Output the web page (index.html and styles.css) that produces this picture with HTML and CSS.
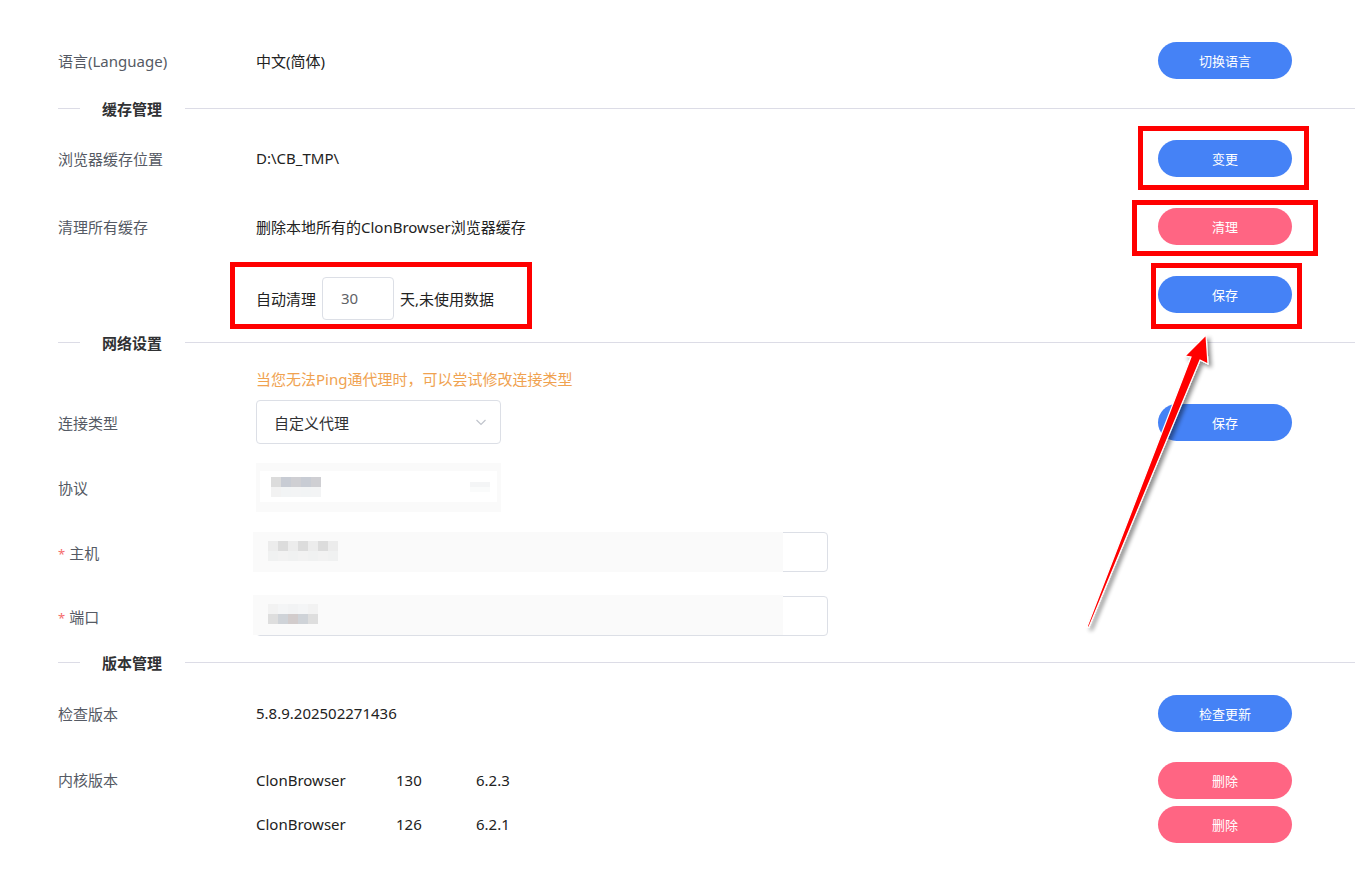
FILE: index.html
```html
<!DOCTYPE html>
<html lang="zh-CN">
<head>
    <meta charset="UTF-8">
    <title>设置</title>
    <link rel="stylesheet" href="styles.css">
</head>
<body>
    <div class="page">
        <div class="row row-lang">
            <div class="label">语言(Language)</div>
            <div class="value">中文(简体)</div>
            <button class="btn btn-blue">切换语言</button>
        </div>

        <div class="divider"><span class="divider-title">缓存管理</span></div>

        <div class="row row-cache">
            <div class="label">浏览器缓存位置</div>
            <div class="value">D:\CB_TMP\</div>
            <button class="btn btn-blue">变更</button>
        </div>
        <div class="row row-cache">
            <div class="label">清理所有缓存</div>
            <div class="value">删除本地所有的ClonBrowser浏览器缓存</div>
            <button class="btn btn-pink">清理</button>
        </div>
        <div class="row row-auto">
            <div class="label"></div>
            <div class="value auto-clean">
                自动清理
                <input class="days-input" type="text" value="30">
                天,未使用数据
            </div>
            <button class="btn btn-blue">保存</button>
        </div>

        <div class="divider"><span class="divider-title">网络设置</span></div>

        <div class="hint">当您无法Ping通代理时，可以尝试修改连接类型</div>
        <div class="row row-select">
            <div class="label">连接类型</div>
            <div class="value">
                <div class="select">
                    <span>自定义代理</span>
                    <svg class="chevron" width="12" height="12" viewBox="0 0 12 12"><path d="M1.5 4 L6 8.5 L10.5 4" fill="none" stroke="#c0c4cc" stroke-width="1.2"/></svg>
                </div>
            </div>
            <button class="btn btn-blue">保存</button>
        </div>
        <div class="row row-protocol">
            <div class="label">协议</div>
            <div class="value">
                <div class="mosaic-box">
                    <div class="mosaic-inner">
                        <div class="pixels">
                            <i class="p1"></i><i class="p2"></i><i class="p3"></i><i class="p2"></i><i class="p3"></i>
                        </div>
                        <div class="pixels pixels-end"><i class="p0"></i><i class="p0"></i></div>
                    </div>
                </div>
            </div>
        </div>
        <div class="row row-field row-host">
            <div class="label"><span class="req">*</span>主机</div>
            <div class="value">
                <div class="field">
                    <div class="field-blur">
                        <div class="pixels"><i class="p4"></i><i class="p1"></i><i class="p4"></i><i class="p1"></i><i class="p4"></i><i class="p1"></i><i class="p4"></i></div>
                    </div>
                </div>
            </div>
        </div>
        <div class="row row-field row-port">
            <div class="label"><span class="req">*</span>端口</div>
            <div class="value">
                <div class="field">
                    <div class="field-blur">
                        <div class="pixels pixels-low"><i class="p1"></i><i class="p3"></i><i class="p2"></i><i class="p3"></i><i class="p1"></i></div>
                    </div>
                </div>
            </div>
        </div>

        <div class="divider divider-version"><span class="divider-title">版本管理</span></div>

        <div class="row row-check">
            <div class="label">检查版本</div>
            <div class="value">5.8.9.202502271436</div>
            <button class="btn btn-blue">检查更新</button>
        </div>
        <div class="row row-kernel">
            <div class="label">内核版本</div>
            <div class="kernel-list">
                <div class="kernel-item">
                    <span class="k-name">ClonBrowser</span>
                    <span class="k-major">130</span>
                    <span class="k-ver">6.2.3</span>
                    <button class="btn btn-pink">删除</button>
                </div>
                <div class="kernel-item">
                    <span class="k-name">ClonBrowser</span>
                    <span class="k-major">126</span>
                    <span class="k-ver">6.2.1</span>
                    <button class="btn btn-pink">删除</button>
                </div>
            </div>
        </div>

        <!-- 标注 -->
        <div class="mark mark-change"></div>
        <div class="mark mark-clear"></div>
        <div class="mark mark-save"></div>
        <div class="mark mark-auto"></div>
        <svg class="arrow" width="1355" height="872" viewBox="0 0 1355 872">
            <defs>
                <filter id="shadow" x="-20%" y="-20%" width="140%" height="140%">
                    <feGaussianBlur in="SourceAlpha" stdDeviation="2"/>
                    <feOffset dx="3" dy="3"/>
                    <feComponentTransfer><feFuncA type="linear" slope="0.45"/></feComponentTransfer>
                    <feMerge><feMergeNode/><feMergeNode in="SourceGraphic"/></feMerge>
                </filter>
            </defs>
            <polygon filter="url(#shadow)" points="1206,335 1208,364 1200,360 1089,627 1087,627 1191,357 1185,356" fill="#ff0000" stroke="#ffffff" stroke-width="1.2" stroke-linejoin="miter"/>
        </svg>
    </div>
</body>
</html>
```

FILE: styles.css
```css
* {
    box-sizing: border-box;
}
body {
    margin: 0;
    background-color: #ffffff;
    font-family: "Microsoft YaHei", "Noto Sans", "Noto Sans CJK SC", sans-serif;
    font-size: 15px;
    color: #222222;
}
.page {
    position: relative;
    width: 1355px;
    height: 872px;
    padding: 28px 0 0 58px;
    overflow: hidden;
}
.row {
    display: flex;
    align-items: center;
    padding-right: 63px;
}
.label {
    width: 198px;
    flex-shrink: 0;
    color: #555a64;
}
.value {
    flex: 1;
    display: flex;
    align-items: center;
    color: #222222;
}
.btn {
    width: 134px;
    height: 37px;
    border: none;
    border-radius: 19px;
    color: #ffffff;
    font-family: inherit;
    font-size: 13px;
    cursor: pointer;
}
.btn-blue {
    background-color: #4582f6;
}
.btn-pink {
    background-color: #ff6583;
}
.row-lang {
    height: 64px;
}
.row-cache {
    height: 68px;
}
.row-auto {
    height: 76px;
}
.row-auto .btn {
    margin-bottom: 8px;
}
.divider {
    display: flex;
    align-items: center;
    height: 32px;
}
.divider::before {
    content: "";
    width: 22px;
    height: 1px;
    background-color: #dcdce6;
}
.divider::after {
    content: "";
    flex: 1;
    height: 1px;
    background-color: #dcdce6;
}
.row-auto + .divider {
    height: 12px;
}
.divider-title {
    padding: 0 23px 0 22px;
    font-weight: bold;
    color: #303133;
}
.auto-clean {
    gap: 6px;
}
.days-input {
    width: 72px;
    height: 43px;
    padding: 0 0 0 18px;
    border: 1px solid #dcdfe6;
    border-radius: 4px;
    font-family: inherit;
    font-size: 15px;
    color: #606266;
    outline: none;
}
.hint {
    margin: 19px 0 9px 198px;
    height: 24px;
    line-height: 24px;
    color: #f0a250;
}
.row-select {
    height: 44px;
}
.select {
    width: 245px;
    height: 44px;
    border: 1px solid #dcdfe6;
    border-radius: 4px;
    display: flex;
    align-items: center;
    justify-content: space-between;
    padding: 0 13px 0 17px;
    color: #303133;
}
.row-protocol {
    margin-top: 19px;
    height: 49px;
}
.mosaic-box {
    width: 245px;
    height: 49px;
    background-color: #fafafa;
    padding: 8px 4px 10px 4px;
}
.mosaic-inner {
    height: 100%;
    background-color: #ffffff;
    display: flex;
    align-items: center;
    justify-content: space-between;
    padding: 0 7px 0 11px;
}
.pixels {
    display: grid;
    grid-template-columns: repeat(auto-fill, 10px);
    grid-auto-flow: column;
}
.pixels i {
    display: block;
    width: 10px;
    height: 20px;
}
.pixels .p0 {
    background: linear-gradient(#f4f5f6 50%, #fafbfb 50%);
}
.pixels .p1 {
    background: linear-gradient(#dcdcdc 50%, #f2f2f2 50%);
}
.pixels .p2 {
    background: linear-gradient(#c8ccd4 50%, #f2f4f5 50%);
}
.pixels .p3 {
    background: linear-gradient(#cfcfd3 50%, #f3f4f5 50%);
}
.pixels .p4 {
    background: linear-gradient(#ececec 50%, #f0f1f1 50%);
}
.pixels-end i {
    height: 10px;
    background: #f5f5f7;
}
.pixels-low .p1 {
    background: linear-gradient(#f2f2f2 50%, #dedede 50%);
}
.pixels-low .p2 {
    background: linear-gradient(#f2f3f4 50%, #d2cccc 50%);
}
.pixels-low .p3 {
    background: linear-gradient(#f4f5f6 50%, #cfd3d8 50%);
}
.row-field {
    height: 40px;
}
.row-host {
    margin-top: 20px;
}
.row-port {
    margin-top: 24px;
}
.req {
    color: #f56c6c;
    margin-right: 4px;
    font-size: 13px;
}
.field {
    position: relative;
    width: 572px;
    height: 40px;
    border: 1px solid #dcdfe6;
    border-radius: 4px;
}
.field-blur {
    position: absolute;
    left: -4px;
    top: -1px;
    width: 530px;
    height: 40px;
    background-color: #fafafa;
    padding: 9px 0 9px 15px;
}
.field-blur .pixels {
    height: 22px;
}
.row-port .field-blur {
    top: -2px;
}
.divider-version {
    margin-top: 20px;
    height: 12px;
}
.row-check {
    height: 90px;
}
.row-kernel {
    align-items: flex-start;
}
.row-kernel .label {
    height: 44px;
    line-height: 44px;
}
.kernel-list {
    flex: 1;
}
.kernel-item {
    display: flex;
    align-items: center;
    height: 44px;
}
.k-name {
    width: 140px;
}
.k-major {
    width: 80px;
}
.k-ver {
    flex: 1;
}
.mark {
    position: absolute;
    border: 5px solid #ff0000;
}
.mark-change {
    left: 1138px;
    top: 126px;
    width: 171px;
    height: 64px;
}
.mark-clear {
    left: 1132px;
    top: 200px;
    width: 186px;
    height: 56px;
}
.mark-save {
    left: 1151px;
    top: 263px;
    width: 151px;
    height: 66px;
}
.mark-auto {
    left: 230px;
    top: 262px;
    width: 302px;
    height: 67px;
}
.arrow {
    position: absolute;
    left: 0;
    top: 0;
    pointer-events: none;
}
```
